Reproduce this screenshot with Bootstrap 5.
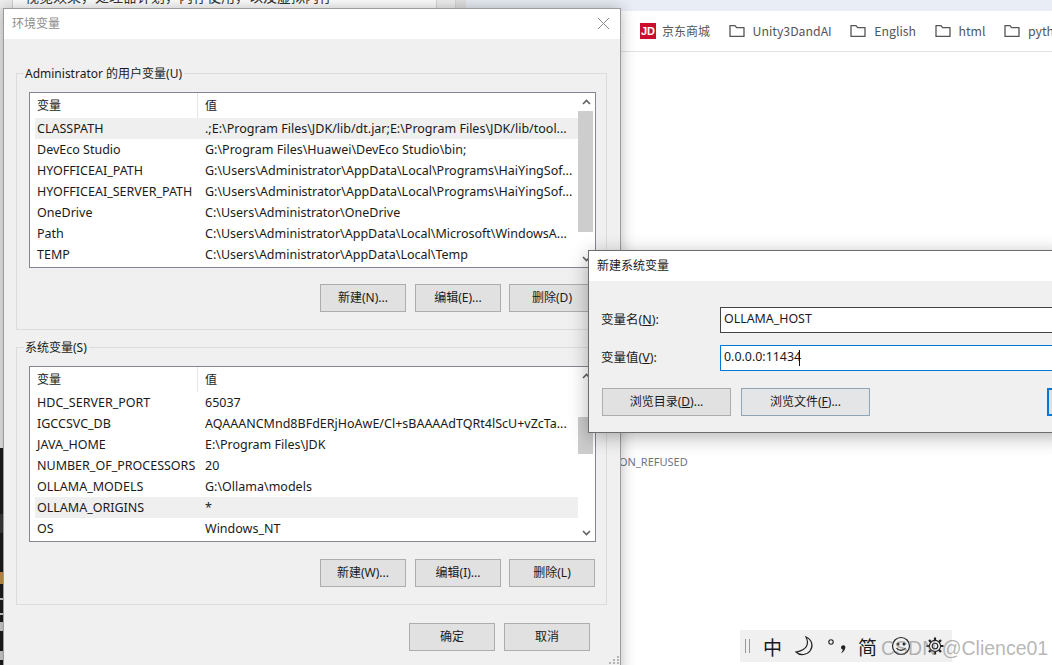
<!doctype html>
<html lang="zh-CN">
<head>
<meta charset="utf-8">
<title>环境变量</title>
<link href="https://cdn.jsdelivr.net/npm/bootstrap@5.3.0/dist/css/bootstrap.min.css" rel="stylesheet">
<style>
html,body{margin:0;height:100%;}
.desk{position:relative;width:1052px;height:665px;overflow:hidden;background:#fff;font-family:"Noto Sans","Noto Sans CJK SC",sans-serif;font-size:12px;color:#1a1a1a;line-height:1;}
.behind{position:absolute;left:0;top:0;width:466px;height:8px;background:#fff;overflow:hidden;}
.behind-edge{position:absolute;left:0;top:0;width:13px;height:8px;background:#f0f0f0;border-right:1px solid #d4d4d4;}
.behind-text{position:absolute;left:25px;top:-13px;font-size:14px;line-height:20px;white-space:nowrap;color:#333;}
.behind-a{position:absolute;left:436px;top:0;width:20px;height:8px;background:#f0f0f0;border-left:1px solid #d9d9d9;border-right:1px solid #d9d9d9;}
.behind-b{position:absolute;left:456px;top:0;width:10px;height:8px;background:#e3e3e3;}
.browser{position:absolute;left:466px;top:0;right:0;bottom:0;background:#fff;}
.tabstrip{height:11px;background:#e9eef6;}
.bookbar{height:41px;border-bottom:1px solid #e2e2e2;padding-left:174px;font-family:"Noto Sans CJK SC","Noto Sans",sans-serif;font-size:12.3px;color:#555;white-space:nowrap;gap:18.5px;}
.book-item{display:flex;align-items:center;gap:8px;flex-shrink:0;}
.book-jd{gap:6px;font-size:12px;}
.jd-logo{width:16px;height:16px;background:#c8102e;color:#fff;font:700 11px/16px "Liberation Sans",sans-serif;text-align:center;}
.refused{position:absolute;left:153px;top:456px;font-family:"Noto Sans",sans-serif;font-size:11px;color:#6b7683;}
.termstrip{position:absolute;left:0;top:448px;width:12px;height:217px;background:#1c1c1c;overflow:hidden;}
.termband{position:absolute;left:0;top:66px;width:12px;height:19px;background:#3a3a3a;}
.termmark{position:absolute;left:0;width:3px;background:#cfcfcf;}
.leftlight{position:absolute;left:0;top:8px;width:12px;height:440px;background:#e9e9e9;}
.dlg{position:absolute;background:#f0f0f0;border:1px solid #9c9c9c;box-shadow:0 0 14px rgba(0,0,0,.28);}
.dlg-main{left:3px;top:8px;width:618px;height:670px;}
.dlg-new{left:588px;top:250px;width:480px;height:183px;border-color:#6d6d6d;box-shadow:0 4px 18px rgba(0,0,0,.3);}
.titlebar{height:30px;background:#fff;font-size:12px;padding-left:8px;}
.dlg-main .titlebar{color:#8d8d8d;}
.dlg-new .titlebar{color:#1a1a1a;padding-left:8px;}
.closex{margin-left:auto;margin-right:10px;margin-bottom:2px;width:13px;height:13px;}
.grp{margin-left:12px;width:591px;border:1px solid #dcdcdc;padding-left:12px;}
.grp-a{margin-top:34px;height:257px;}
.grp-b{margin-top:17px;height:258px;}
.grp-label{display:block;width:max-content;margin-left:-5px;margin-top:-8px;height:18px;padding:0 2px 0 1px;background:#f0f0f0;line-height:16px;}
.vlist{width:567px;height:176px;border:1px solid #828790;background:#fff;margin-top:8px;}
.vhead{height:25px;}
.vrow{height:21px;margin-left:5px;font-size:12.5px;padding-top:2px;}
.vrow.vhead{height:25px;font-size:12px;padding-top:0;}
.vrow.sel{background:#efefef;}
.c1{width:163px;padding-left:2px;flex-shrink:0;white-space:nowrap;overflow:visible;}
.c2{flex:1;padding-left:7px;white-space:nowrap;overflow:hidden;}
.vhead .c1{border-right:1px solid #e5e5e5;height:25px;}
.sbar{width:17px;background:#fff;flex-shrink:0;}
.sarrow{height:17px;}
.sthumb{width:15px;background:#cdcdcd;margin-left:0;}
.winbtn.btn{width:86px;height:28px;padding:0;border-radius:0;background:#e1e1e1;border:1px solid #adadad;color:#1a1a1a;font-size:12px;line-height:1;display:flex;align-items:center;justify-content:center;}
.btnrow{width:566px;margin-top:16px;gap:9px;}
.btnrow-b{margin-top:17px;}
.btnrow .gap-s{margin-left:-1px;}
.footer{width:586px;margin-left:0;margin-top:18px;gap:9px;}
.grip{position:absolute;left:605px;top:647px;width:11px;height:9px;}
.field-label{width:131px;flex-shrink:0;padding-left:12px;font-size:12.5px;}
.inputwrap{position:relative;width:340px;flex-shrink:0;}
.field .form-control{width:340px;height:26px;border-radius:0;padding:0 0 4px 3px;font-size:12.4px;line-height:1;border:1px solid #444;color:#1a1a1a;background:#fff;box-shadow:none;font-family:"Noto Sans",sans-serif;}
.field .form-control.focusfield{border-color:#0078d7;}
.caretmark{position:absolute;left:79px;top:5px;width:1px;height:16px;background:#111;}
.fieldbox{padding-top:26px;gap:12px;display:flex;flex-direction:column;}
.browsebtn.btn{width:129px;height:28px;flex-shrink:0;padding:0;border-radius:0;background:#e1e1e1;border:1px solid #adadad;color:#1a1a1a;font-size:12px;line-height:1;display:flex;align-items:center;justify-content:center;}
.browsebtn.hoverb{border-color:#8fa5b5;background:#e3e5e7;}
.browse-row{padding-left:13px;margin-top:17px;gap:10px;}
.okedge{width:40px;height:28px;border:2px solid #0078d7;background:#e1e1e1;margin-left:167px;flex-shrink:0;}
.ime{position:absolute;left:740px;top:630px;width:212px;height:32px;background:#f0f0f0;color:#1a1a1a;padding-left:5px;}
.ime-bars{width:5px;height:14px;border-left:1px solid #999;border-right:1px solid #999;margin-right:13px;flex-shrink:0;}
.ime-zh{font-family:"Noto Sans CJK SC",sans-serif;font-size:19px;line-height:1;width:20px;flex-shrink:0;}
.ime-moon{margin-left:11px;flex-shrink:0;}
.ime-punct{margin-left:12px;width:20px;flex-shrink:0;}
.ime-jian{margin-left:10px;}
.ime-smile{margin-left:13px;flex-shrink:0;}
.ime-gear{margin-left:15px;flex-shrink:0;}
.watermark{position:absolute;left:881px;top:636px;font:19.5px/24px "Liberation Sans",sans-serif;color:rgba(120,120,120,.55);white-space:nowrap;}
</style>
</head>
<body>
<div class="desk">
  <div class="behind"><div class="behind-edge"></div><div class="behind-text">视觉效果，处理器计划，内存使用，以及虚拟内存</div><div class="behind-a"></div><div class="behind-b"></div></div>
  <div class="leftlight"></div>
  <div class="termstrip"><div class="termband"></div>
    <div class="termmark" style="top:124px;height:12px;background:#c9924a"></div>
    <div class="termmark" style="top:150px;height:2px"></div>
    <div class="termmark" style="top:165px;height:2px"></div>
    <div class="termmark" style="top:174px;height:9px"></div>
    <div class="termmark" style="top:203px;height:9px"></div>
  </div>

  <div class="browser">
    <div class="tabstrip"></div>
    <div class="bookbar d-flex align-items-center">
      <div class="book-item book-jd"><span class="jd-logo">JD</span><span>京东商城</span></div>
      <div class="book-item"><svg width="16" height="14" viewBox="0 0 16 14" fill="none" stroke="#555" stroke-width="1.3" stroke-linejoin="round"><path d="M1 12.4V1.6h5l1.6 2H15v8.8z"/></svg><span>Unity3DandAI</span></div>
      <div class="book-item"><svg width="16" height="14" viewBox="0 0 16 14" fill="none" stroke="#555" stroke-width="1.3" stroke-linejoin="round"><path d="M1 12.4V1.6h5l1.6 2H15v8.8z"/></svg><span>English</span></div>
      <div class="book-item"><svg width="16" height="14" viewBox="0 0 16 14" fill="none" stroke="#555" stroke-width="1.3" stroke-linejoin="round"><path d="M1 12.4V1.6h5l1.6 2H15v8.8z"/></svg><span>html</span></div>
      <div class="book-item"><svg width="16" height="14" viewBox="0 0 16 14" fill="none" stroke="#555" stroke-width="1.3" stroke-linejoin="round"><path d="M1 12.4V1.6h5l1.6 2H15v8.8z"/></svg><span>python</span></div>
    </div>
    <div class="refused">ON_REFUSED</div>
  </div>

  <div class="dlg dlg-main">
    <div class="titlebar d-flex align-items-center"><span>环境变量</span>
      <svg class="closex" viewBox="0 0 13 13" stroke="#8a8a8a" fill="none"><path d="M1 1l11 11M12 1L1 12"/></svg></div>

    <div class="grp grp-a">
      <span class="grp-label">Administrator 的用户变量(U)</span>
      <div class="vlist d-flex">
        <div class="flex-grow-1">
          <div class="vrow vhead d-flex align-items-center"><div class="c1 d-flex align-items-center">变量</div><div class="c2">值</div></div>
          <div class="vrow sel d-flex align-items-center"><div class="c1">CLASSPATH</div><div class="c2">.;E:\Program Files\JDK/lib/dt.jar;E:\Program Files\JDK/lib/tool...</div></div>
          <div class="vrow d-flex align-items-center"><div class="c1">DevEco Studio</div><div class="c2">G:\Program Files\Huawei\DevEco Studio\bin;</div></div>
          <div class="vrow d-flex align-items-center"><div class="c1">HYOFFICEAI_PATH</div><div class="c2">G:\Users\Administrator\AppData\Local\Programs\HaiYingSof...</div></div>
          <div class="vrow d-flex align-items-center"><div class="c1">HYOFFICEAI_SERVER_PATH</div><div class="c2">G:\Users\Administrator\AppData\Local\Programs\HaiYingSof...</div></div>
          <div class="vrow d-flex align-items-center"><div class="c1">OneDrive</div><div class="c2">C:\Users\Administrator\OneDrive</div></div>
          <div class="vrow d-flex align-items-center"><div class="c1">Path</div><div class="c2">C:\Users\Administrator\AppData\Local\Microsoft\WindowsA...</div></div>
          <div class="vrow d-flex align-items-center"><div class="c1">TEMP</div><div class="c2">C:\Users\Administrator\AppData\Local\Temp</div></div>
        </div>
        <div class="sbar d-flex flex-column">
          <div class="sarrow d-flex align-items-center justify-content-center"><svg width="9" height="6" viewBox="0 0 9 6" fill="none" stroke="#606060" stroke-width="1.6"><path d="M1 5l3.5-3.5L8 5"/></svg></div>
          <div class="sthumb" style="margin-top:1px;height:121px"></div>
          <div class="sarrow mt-auto d-flex align-items-center justify-content-center"><svg width="9" height="6" viewBox="0 0 9 6" fill="none" stroke="#606060" stroke-width="1.6"><path d="M1 1l3.5 3.5L8 1"/></svg></div>
        </div>
      </div>
      <div class="btnrow d-flex justify-content-end">
        <button class="btn winbtn">新建(N)...</button>
        <button class="btn winbtn">编辑(E)...</button>
        <button class="btn winbtn gap-s">删除(D)</button>
      </div>
    </div>

    <div class="grp grp-b">
      <span class="grp-label">系统变量(S)</span>
      <div class="vlist d-flex">
        <div class="flex-grow-1">
          <div class="vrow vhead d-flex align-items-center"><div class="c1 d-flex align-items-center">变量</div><div class="c2">值</div></div>
          <div class="vrow d-flex align-items-center"><div class="c1">HDC_SERVER_PORT</div><div class="c2">65037</div></div>
          <div class="vrow d-flex align-items-center"><div class="c1">IGCCSVC_DB</div><div class="c2">AQAAANCMnd8BFdERjHoAwE/Cl+sBAAAAdTQRt4lScU+vZcTa...</div></div>
          <div class="vrow d-flex align-items-center"><div class="c1">JAVA_HOME</div><div class="c2">E:\Program Files\JDK</div></div>
          <div class="vrow d-flex align-items-center"><div class="c1">NUMBER_OF_PROCESSORS</div><div class="c2">20</div></div>
          <div class="vrow d-flex align-items-center"><div class="c1">OLLAMA_MODELS</div><div class="c2">G:\Ollama\models</div></div>
          <div class="vrow sel d-flex align-items-center"><div class="c1">OLLAMA_ORIGINS</div><div class="c2">*</div></div>
          <div class="vrow d-flex align-items-center"><div class="c1">OS</div><div class="c2">Windows_NT</div></div>
        </div>
        <div class="sbar d-flex flex-column">
          <div class="sarrow d-flex align-items-center justify-content-center"><svg width="9" height="6" viewBox="0 0 9 6" fill="none" stroke="#606060" stroke-width="1.6"><path d="M1 5l3.5-3.5L8 5"/></svg></div>
          <div class="sthumb" style="margin-top:33px;height:37px"></div>
          <div class="sarrow mt-auto d-flex align-items-center justify-content-center"><svg width="9" height="6" viewBox="0 0 9 6" fill="none" stroke="#606060" stroke-width="1.6"><path d="M1 1l3.5 3.5L8 1"/></svg></div>
        </div>
      </div>
      <div class="btnrow btnrow-b d-flex justify-content-end">
        <button class="btn winbtn">新建(W)...</button>
        <button class="btn winbtn">编辑(I)...</button>
        <button class="btn winbtn gap-s">删除(L)</button>
      </div>
    </div>

    <div class="footer d-flex justify-content-end">
      <button class="btn winbtn">确定</button>
      <button class="btn winbtn">取消</button>
    </div>
    <svg class="grip" viewBox="0 0 11 9" fill="#b5b5b5"><rect x="8" y="0" width="2" height="2"/><rect x="4" y="3" width="2" height="2"/><rect x="8" y="3" width="2" height="2"/><rect x="0" y="6" width="2" height="2"/><rect x="4" y="6" width="2" height="2"/><rect x="8" y="6" width="2" height="2"/></svg>
  </div>

  <div class="dlg dlg-new">
    <div class="titlebar d-flex align-items-center">新建系统变量</div>
    <div class="fieldbox">
      <div class="field d-flex align-items-center"><label class="field-label">变量名(<u>N</u>):</label><div class="inputwrap"><input class="form-control" value="OLLAMA_HOST"></div></div>
      <div class="field d-flex align-items-center"><label class="field-label">变量值(<u>V</u>):</label><div class="inputwrap"><input class="form-control focusfield" value="0.0.0.0:11434"><span class="caretmark"></span></div></div>
    </div>
    <div class="browse-row d-flex">
      <button class="btn browsebtn">浏览目录(<u>D</u>)...</button>
      <button class="btn browsebtn hoverb">浏览文件(<u>F</u>)...</button>
      <div class="okedge"></div>
    </div>
  </div>

  <div class="ime d-flex align-items-center">
    <div class="ime-bars"></div>
    <span class="ime-zh">中</span>
    <svg class="ime-moon" width="22" height="22" viewBox="0 0 22 22" fill="none" stroke="#222" stroke-width="1.2"><path d="M12 2c3 6 2 13-10 15 4 4 11 3 14-1s3-11-4-14z"/></svg>
    <svg class="ime-punct" width="20" height="20" viewBox="0 0 20 20" fill="none"><circle cx="3" cy="6" r="2.2" stroke="#222" stroke-width="1.1"/><path d="M13 11.5a2.2 2.2 0 1 1 4 1.2c-.5 2-2 3.6-4 4.5 1-1.3 1.7-2.4 1.8-3.6a2.2 2.2 0 0 1-1.8-2.1z" fill="#222"/></svg>
    <span class="ime-zh ime-jian">简</span>
    <svg class="ime-smile" width="20" height="20" viewBox="0 0 20 20" fill="none" stroke="#222" stroke-width="1.2"><circle cx="10" cy="10" r="8.5"/><circle cx="7" cy="8" r=".9" fill="#222"/><circle cx="13" cy="8" r=".9" fill="#222"/><path d="M5.5 12c2 3.2 7 3.2 9 0"/></svg>
    <svg class="ime-gear" width="18" height="18" viewBox="0 0 18 18" fill="none" stroke="#222" stroke-width="1.1"><circle cx="9" cy="9" r="2.8"/><circle cx="9" cy="9" r="5.6"/><path stroke-width="2.2" d="M9 .5v3M9 14.5v3M.5 9h3M14.5 9h3M3 3l2.1 2.1M12.9 12.9L15 15M15 3l-2.1 2.1M5.1 12.9L3 15"/></svg>
  </div>
  <div class="watermark">CSDN @Clience01</div>
</div>
<script src="https://cdn.jsdelivr.net/npm/bootstrap@5.3.0/dist/js/bootstrap.bundle.min.js"></script>
</body>
</html>
